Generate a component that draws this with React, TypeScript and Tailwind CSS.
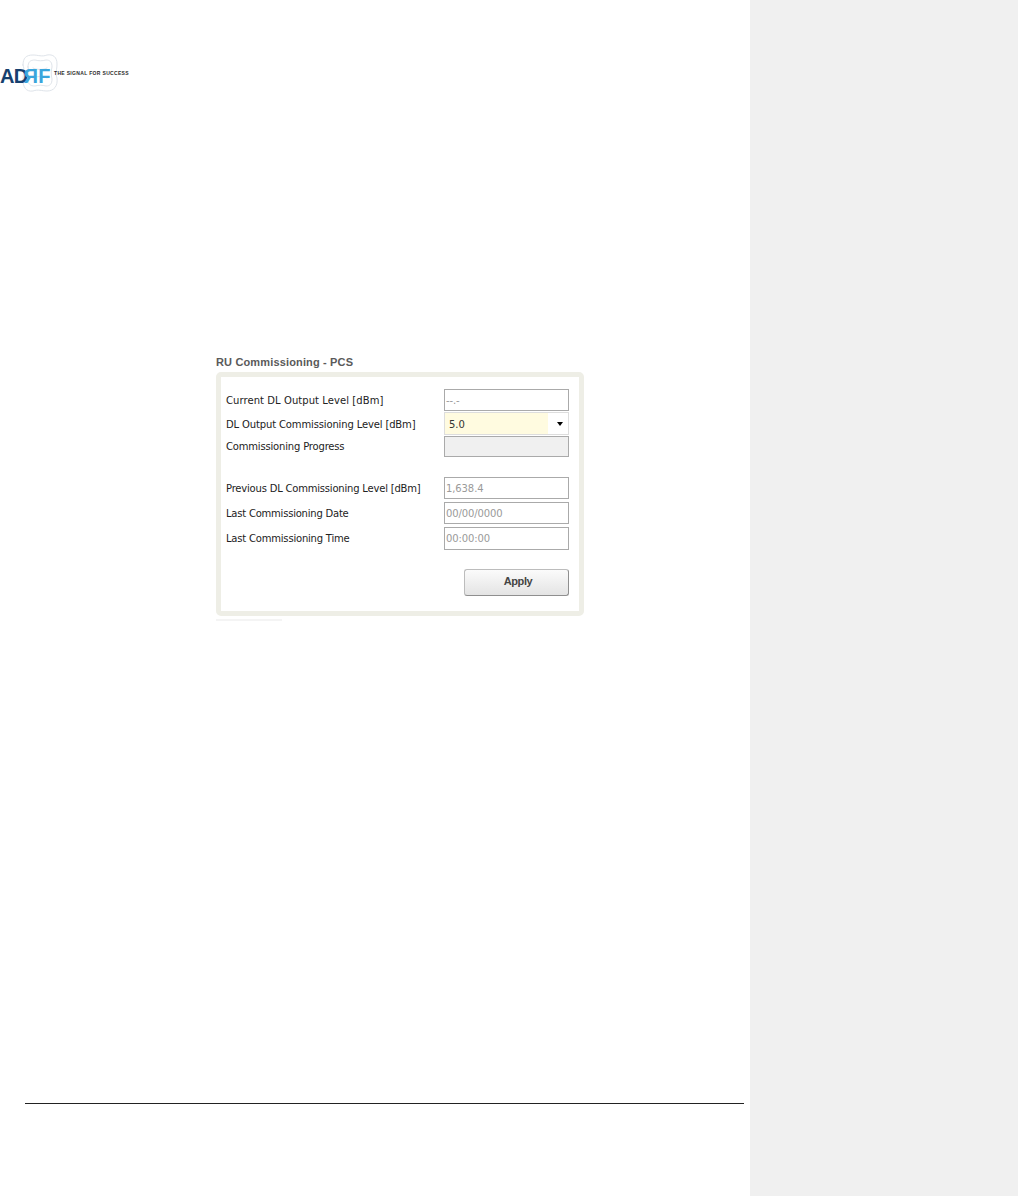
import React from 'react';

const fieldBox = 'w-[125px] border border-[#aaaaaa] bg-white pl-[1px] flex items-center text-[10px] tracking-[-0.1px] text-[#9a9a9a]';

const Logo = () => (
  <div className="relative h-[40px] w-[130px]">
    <svg className="absolute left-[21px] top-[-1px]" width="38" height="40" viewBox="0 0 38 40" fill="none" stroke="#dfe4ea" strokeWidth="1" strokeLinecap="round">
      <path d="M2 12C2 5 5 2 12 2c5 0 9 2 14 0 6-1 10 2 10 9 0 6-2 9 0 14 1 8-3 13-10 13-5 0-9-2-14 0-7 1-10-4-10-11 0-6 2-10 0-15z" />
      <path d="M7 14c0-5 2-7 7-7 4 1 7 1 11 0 4 0 6 2 6 7-1 4-1 8 0 12 0 5-2 7-6 7-4-1-7-1-11 0-5 0-7-2-7-7 1-4 1-8 0-12z" />
      <path d="M12 15c3 2 11 2 14 0M12 25c3-2 11-2 14 0" />
    </svg>
    <div className="absolute left-0 top-[10px] flex items-center font-['Liberation_Sans',sans-serif] text-[20px] font-bold leading-[24px] tracking-[-0.8px]">
      <span className="text-[#16406e]">AD</span>
      <span className="inline-block -scale-x-100 tracking-[-3.4px] text-[#3aa5dc]">R</span>
      <span className="text-[#3aa5dc]">F</span>
    </div>
    <span className="absolute left-[54px] top-[15px] whitespace-nowrap font-['Liberation_Sans',sans-serif] text-[5px] font-bold leading-[8px] tracking-[0.33px] text-[#2c2c2c]">
      THE SIGNAL FOR SUCCESS
    </span>
  </div>
);

const Row = ({ label, labelClass = 'tracking-[-0.14px]', children }: { label: string; labelClass?: string; children: React.ReactNode }) => (
  <div className="flex items-center justify-between">
    <span className={`whitespace-nowrap text-[10px] text-[#222222] ${labelClass}`}>{label}</span>
    {children}
  </div>
);

export default function App() {
  return (
    <div className="flex h-[1196px] w-[1018px] overflow-hidden bg-white font-['DejaVu_Sans',sans-serif]">
      <main className="flex w-[750px] flex-col">
        <div className="pt-[54px]">
          <Logo />
        </div>

        <section className="ml-[216px] mt-[261px] w-[368px]">
          <h2 className="h-[17px] font-['Liberation_Sans',sans-serif] text-[11px] font-bold leading-[14px] tracking-[0.15px] text-[#5a5a5a]">
            RU Commissioning - PCS
          </h2>
          <div className="h-[244px] rounded-[5px] border-[5px] border-[#eeeee6] bg-white pl-[5px] pr-[10px] pt-[12px]">
            <div className="flex flex-col gap-[1px]">
              <Row label="Current DL Output Level [dBm]" labelClass="tracking-[0.07px]">
                <div className={`${fieldBox} h-[22px]`}>--.-</div>
              </Row>
              <Row label="DL Output Commissioning Level [dBm]" labelClass="pt-[1px] tracking-[-0.14px]">
                <div className="flex h-[23px] w-[125px] items-center justify-between border border-[#dddddd] bg-white">
                  <div className="flex h-full w-[103px] items-center bg-[#fffbe0] pl-[4px] pt-[1px] text-[10px] text-[#333333]">5.0</div>
                  <div className="mr-[5px] h-0 w-0 border-x-[3.5px] border-t-[4px] border-x-transparent border-t-black" />
                </div>
              </Row>
              <Row label="Commissioning Progress" labelClass="tracking-[-0.18px]">
                <div className="h-[21px] w-[125px] border border-[#aaaaaa] bg-[#f0f0f0]" />
              </Row>
            </div>
            <div className="mt-[20px] flex flex-col gap-[3px]">
              <Row label="Previous DL Commissioning Level [dBm]" labelClass="tracking-[-0.2px]">
                <div className={`${fieldBox} h-[22px]`}>1,638.4</div>
              </Row>
              <Row label="Last Commissioning Date" labelClass="tracking-[-0.22px]">
                <div className={`${fieldBox} h-[22px]`}>00/00/0000</div>
              </Row>
              <Row label="Last Commissioning Time" labelClass="tracking-[-0.2px]">
                <div className={`${fieldBox} h-[23px]`}>00:00:00</div>
              </Row>
            </div>
            <div className="mt-[19px] flex justify-end">
              <button className="h-[27px] w-[105px] rounded-[3px] border border-[#bcbcbc] border-b-[#8f8f8f] border-r-[#8f8f8f] bg-gradient-to-b from-[#fbfbfb] to-[#e4e4e4] pb-[2px] pl-[3px] font-['Liberation_Sans',sans-serif] text-[11px] font-bold tracking-[-0.4px] text-[#444444]">
                Apply
              </button>
            </div>
          </div>
          <div className="mt-[3px] h-[2px] w-[66px] bg-[#f4f4f4]" />
        </section>

        <div className="mb-[92px] ml-[25px] mt-auto h-px w-[719px] bg-[#222222]" />
      </main>
      <aside className="w-[268px] bg-[#f0f0f0]" />
    </div>
  );
}
